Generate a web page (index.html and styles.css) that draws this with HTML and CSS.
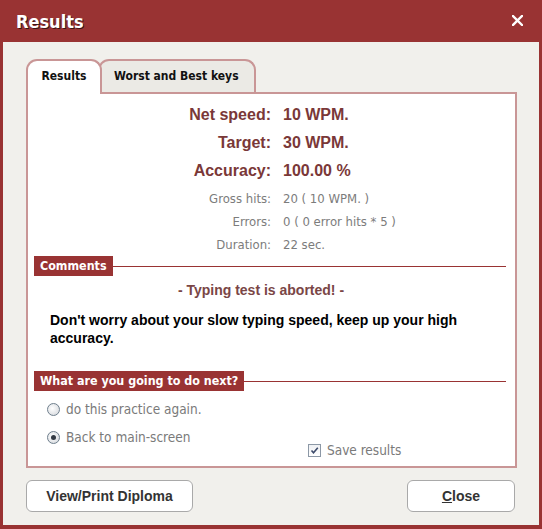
FILE: index.html
```html
<!DOCTYPE html>
<html>
<head>
<meta charset="utf-8">
<link rel="stylesheet" href="styles.css">
</head>
<body>
<div class="window">
  <div class="titlebar">
    <div class="title">Results</div>
    <svg class="close-x" width="11" height="11" viewBox="0 0 11 11"><path d="M1 1 L10 10 M10 1 L1 10" stroke="#fff" stroke-width="2.4" stroke-linecap="square"/></svg>
  </div>
  <div class="content">
    <div class="tabs">
      <div class="tab active">Results</div>
      <div class="tab inactive">Worst and Best keys</div>
    </div>
    <div class="panel">
      <div class="stats">
        <div class="lbl big">Net speed:</div><div class="val big">10 WPM.</div>
        <div class="lbl big">Target:</div><div class="val big">30 WPM.</div>
        <div class="lbl big">Accuracy:</div><div class="val big">100.00 %</div>
        <div class="lbl small first">Gross hits:</div><div class="val small first">20 ( 10 WPM. )</div>
        <div class="lbl small">Errors:</div><div class="val small">0 ( 0 error hits * 5 )</div>
        <div class="lbl small">Duration:</div><div class="val small">22 sec.</div>
      </div>
      <div class="section-head"><span class="section-label">Comments</span><span class="section-line"></span></div>
      <div class="aborted">- Typing test is aborted! -</div>
      <div class="advice">Don't worry about your slow typing speed, keep up your high accuracy.</div>
      <div class="section-head next-head"><span class="section-label">What are you going to do next?</span><span class="section-line"></span></div>
      <div class="next-body">
        <div class="options">
          <div class="option"><span class="radio"></span><span>do this practice again.</span></div>
          <div class="option"><span class="radio checked"></span><span>Back to main-screen</span></div>
        </div>
        <div class="save">
          <span class="checkbox"><svg width="11" height="11" viewBox="0 0 11 11"><path d="M2.5 5.5 L4.5 7.8 L8.8 2.8" fill="none" stroke="#3c4a6a" stroke-width="1.6"/></svg></span>
          <span>Save results</span>
        </div>
      </div>
    </div>
    <div class="buttons">
      <div class="btn btn-diploma">View/Print Diploma</div>
      <div class="btn btn-close"><u>C</u>lose</div>
    </div>
  </div>
</div>
</body>
</html>
```
FILE: styles.css
```css
html, body {
  margin: 0;
  padding: 0;
}
body {
  width: 542px;
  height: 529px;
  overflow: hidden;
  background: #f1f0ec;
}
.window {
  width: 542px;
  height: 529px;
  box-sizing: border-box;
  border-left: 3px solid #993333;
  border-right: 3px solid #993333;
  border-bottom: 4px solid #993333;
  background: #f1f0ec;
  display: flex;
  flex-direction: column;
}
.titlebar {
  height: 42px;
  flex: none;
  background: #993333;
  display: flex;
  align-items: center;
  justify-content: space-between;
  box-sizing: border-box;
  margin-left: -3px;
  margin-right: -3px;
  padding: 0 16px 0 16px;
}
.title {
  font-family: "DejaVu Sans Condensed", "DejaVu Sans", sans-serif;
  font-weight: bold;
  font-size: 18px;
  color: #fff;
  text-shadow: 1px 1px 0 #3a1414;
  margin-top: 1px;
}
.close-x {
  display: block;
  margin-right: 3px;
  margin-top: -1px;
}
.content {
  flex: 1;
  padding: 17px 22px 0 23px;
  display: flex;
  flex-direction: column;
}
.tabs {
  display: flex;
  align-items: flex-end;
  height: 33px;
}
.tab {
  font-family: "DejaVu Sans Condensed", "DejaVu Sans", sans-serif;
  font-weight: bold;
  font-size: 12px;
  color: #111;
  box-sizing: border-box;
  border: 2px solid #c99696;
  border-bottom: none;
  border-radius: 11px 11px 0 0;
  display: flex;
  align-items: center;
}
.tab.active {
  position: relative;
  z-index: 2;
  background: #fff;
  height: 35px;
  margin-bottom: -2px;
  width: 76px;
  justify-content: center;
  padding-bottom: 3px;
}
.tab.inactive {
  background: #ebeae5;
  height: 33px;
  margin-left: -4px;
  width: 158px;
  padding-left: 14px;
  padding-bottom: 2px;
}
.panel {
  background: #fff;
  border: 2px solid #c99696;
  height: 376px;
  box-sizing: border-box;
  display: flex;
  flex-direction: column;
}
.stats {
  display: grid;
  grid-template-columns: 243px 1fr;
  column-gap: 12px;
  padding-top: 7px;
}
.lbl {
  text-align: right;
}
.big {
  font-family: "Liberation Sans", Arial, sans-serif;
  font-weight: bold;
  font-size: 16px;
  line-height: 28px;
  color: #7a3838;
}
.small {
  font-family: "DejaVu Sans Condensed", "DejaVu Sans", sans-serif;
  font-size: 13px;
  line-height: 23px;
  color: #7c7c7c;
}
.small.first {
  margin-top: 2px;
}
.section-head {
  display: flex;
  align-items: center;
  margin: 0 9px 0 6px;
}
.section-label {
  background: #993333;
  color: #fff;
  font-family: "DejaVu Sans Condensed", "DejaVu Sans", sans-serif;
  font-weight: bold;
  font-size: 12.4px;
  height: 20px;
  line-height: 20px;
  padding: 0 6px;
}
.section-line {
  flex: 1;
  height: 1px;
  background: #993333;
}
.aborted {
  font-family: "Liberation Sans", Arial, sans-serif;
  font-weight: bold;
  font-size: 14px;
  line-height: 20px;
  color: #7a4646;
  text-align: center;
  padding-right: 21px;
  margin-top: 4px;
}
.advice {
  font-family: "Liberation Sans", Arial, sans-serif;
  font-weight: bold;
  font-size: 14px;
  line-height: 18px;
  color: #000;
  padding: 0 30px 0 22px;
  margin-top: 11px;
}
.next-head {
  margin-top: 24px;
}
.next-body {
  display: flex;
  padding: 4px 0 0 19px;
}
.options {
  width: 261px;
  display: flex;
  flex-direction: column;
}
.option {
  display: flex;
  align-items: center;
  height: 28px;
  font-family: "DejaVu Sans Condensed", "DejaVu Sans", sans-serif;
  font-size: 13.5px;
  color: #7a7a7a;
}
.radio {
  width: 13px;
  height: 13px;
  box-sizing: border-box;
  border: 1px solid #6f7f8d;
  border-radius: 50%;
  background: radial-gradient(circle at 40% 40%, #ffffff 0%, #e3e5e8 60%, #cfd3d8 100%);
  margin-right: 6px;
  display: flex;
  align-items: center;
  justify-content: center;
}
.radio.checked::after {
  content: "";
  width: 5px;
  height: 5px;
  border-radius: 50%;
  background: #333a44;
}
.save {
  display: flex;
  align-items: center;
  height: 18px;
  margin-top: 46px;
  font-family: "DejaVu Sans Condensed", "DejaVu Sans", sans-serif;
  font-size: 13.5px;
  color: #7a7a7a;
}
.checkbox {
  width: 13px;
  height: 13px;
  box-sizing: border-box;
  border: 1px solid #8c98a6;
  background: linear-gradient(#eef0f3, #ffffff);
  margin-right: 6px;
  display: flex;
  align-items: center;
  justify-content: center;
}
.checkbox svg {
  display: block;
}
.buttons {
  display: flex;
  justify-content: space-between;
  margin-top: 12px;
  padding-right: 2px;
}
.btn {
  height: 32px;
  box-sizing: border-box;
  border: 1px solid #a9a9a9;
  border-radius: 6px;
  background: #fff;
  font-family: "Liberation Sans", Arial, sans-serif;
  font-weight: bold;
  font-size: 14px;
  color: #333;
  display: flex;
  align-items: center;
  justify-content: center;
}
.btn-diploma {
  width: 167px;
}
.btn-close {
  width: 108px;
}
```
